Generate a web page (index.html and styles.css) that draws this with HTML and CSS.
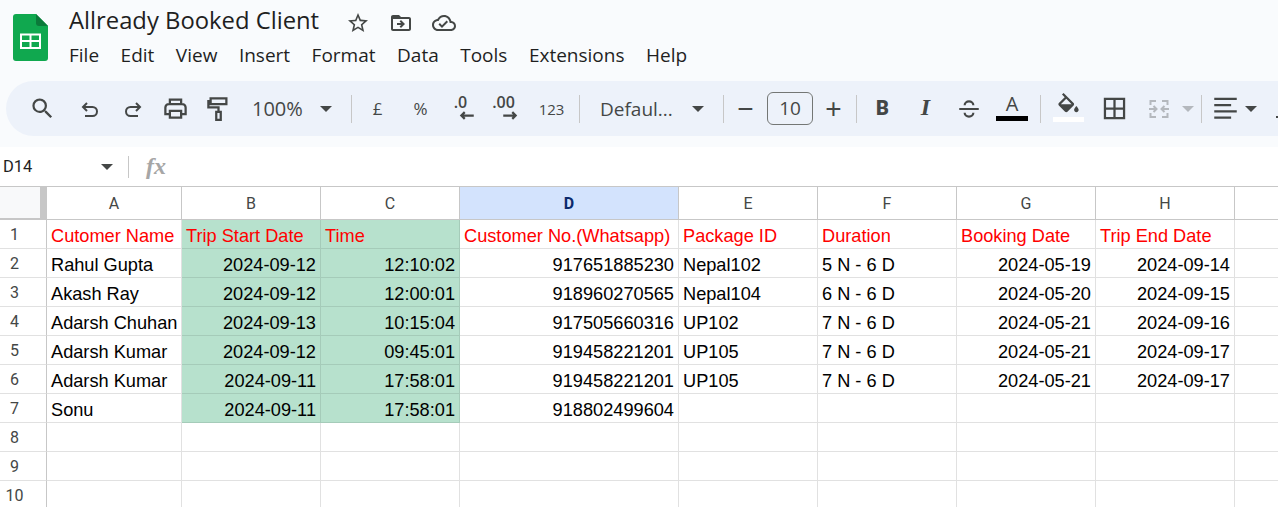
FILE: index.html
```html
<!DOCTYPE html>
<html lang="en">
<head>
    <meta charset="UTF-8">
    <title>Allready Booked Client</title>
    <link rel="stylesheet" href="styles.css">
</head>
<body>
    <header class="doc-header">
        <svg class="logo" viewBox="0 0 35 47">
            <path d="M3 0H23L35 12V44a3 3 0 0 1-3 3H3a3 3 0 0 1-3-3V3a3 3 0 0 1 3-3z" fill="#10a84f"/>
            <path d="M23 0L35 12H26a3 3 0 0 1-3-3z" fill="#0b7a3a"/>
            <path d="M7 19.500H28V35H7zM9 21.500V26H16.500V21.500zM18.500 21.500V26H26V21.500zM9 28V33H16.500V28zM18.500 28V33H26V28z" fill="#fff" fill-rule="evenodd"/>
        </svg>
        <div class="doc-info">
            <div class="title-row">
                <h1 class="doc-title">Allready Booked Client</h1>
                <svg class="title-icon" viewBox="0 0 24 24"><path d="M22 9.240l-7.190-.62L12 2 9.190 8.630 2 9.240l5.460 4.730L5.820 21 12 17.270 18.180 21l-1.630-7.030L22 9.240zM12 15.400l-3.760 2.270 1-4.280-3.320-2.880 4.380-.38L12 6.100l1.710 4.040 4.380.38-3.320 2.880 1 4.280L12 15.400z"/></svg>
                <svg class="title-icon" viewBox="0 0 24 24"><path d="M20 6h-8l-2-2H4c-1.100 0-2 .9-2 2v12c0 1.100.9 2 2 2h16c1.100 0 2-.9 2-2V8c0-1.100-.9-2-2-2zm0 12H4V8h16v10zm-8.010-9l-1.410 1.410L12.160 12H8v2h4.160l-1.590 1.590L11.990 17 16 13.010 11.990 9z"/></svg>
                <svg class="title-icon" viewBox="0 0 24 24"><path d="M19.350 10.040C18.670 6.590 15.640 4 12 4 9.110 4 6.600 5.640 5.350 8.040 2.340 8.360 0 10.910 0 14c0 3.310 2.690 6 6 6h13c2.760 0 5-2.240 5-5 0-2.640-2.050-4.780-4.650-4.960zM19 18H6c-2.210 0-4-1.790-4-4 0-2.050 1.530-3.760 3.560-3.970l1.070-.11.5-.95C8.080 7.140 9.940 6 12 6c2.620 0 4.880 1.860 5.390 4.430l.3 1.500 1.530.11c1.560.1 2.780 1.410 2.780 2.960 0 1.650-1.350 3-3 3zm-9-3.820l-2.090-2.090L6.500 13.500 10 17l6.010-6.010-1.410-1.410z"/></svg>
            </div>
            <nav class="menu">
                <span>File</span><span>Edit</span><span>View</span><span>Insert</span><span>Format</span><span>Data</span><span>Tools</span><span>Extensions</span><span>Help</span>
            </nav>
        </div>
    </header>

    <div class="toolbar">
        <div class="tool tool-search"><svg class="big" viewBox="0 0 24 24"><path d="M15.500 14h-.79l-.28-.27A6.470 6.470 0 0 0 16 9.500 6.500 6.500 0 1 0 9.500 16c1.610 0 3.090-.59 4.230-1.570l.27.28v.79l5 4.990L20.490 19l-4.990-5zm-6 0C7.010 14 5 11.990 5 9.500S7.010 5 9.500 5 14 7.010 14 9.500 11.990 14 9.500 14z"/></svg></div>
        <div class="tool"><svg class="line" viewBox="0 0 24 24"><path d="M9 6L5 10l4 4M5 10h9.500a4.500 4.500 0 0 1 0 9H7"/></svg></div>
        <div class="tool"><svg class="line" viewBox="0 0 24 24"><path d="M15 6l4 4-4 4M19 10H9.500a4.500 4.500 0 0 0 0 9H17"/></svg></div>
        <div class="tool"><svg class="line big" viewBox="0 0 24 24"><path d="M7 8V4h10v4M7 17H3v-6a3 3 0 0 1 3-3h12a3 3 0 0 1 3 3v6h-4M7 14h10v6H7z"/></svg></div>
        <div class="tool"><svg class="line big" viewBox="0 0 24 24"><path d="M5 3h14v5H5zM5 5.500H3V11h9v4M10 15h4v7h-4z"/></svg></div>
        <div class="zoom-val">100%</div>
        <div class="caret-box"><i class="caret"></i></div>
        <div class="sep sep-a"></div>
        <div class="tool text-tool">£</div>
        <div class="tool text-tool">%</div>
        <div class="tool dec-tool"><b>.0</b><svg class="line" viewBox="0 0 14 8"><path d="M13 4H2M5 1L2 4l3 3"/></svg></div>
        <div class="tool dec-tool"><b>.00</b><svg class="line" viewBox="0 0 14 8"><path d="M1 4h11M9 1l3 3-3 3"/></svg></div>
        <div class="tool text-tool num-tool">123</div>
        <div class="sep sep-b"></div>
        <div class="font-name">Defaul...</div>
        <div class="caret-box font-caret"><i class="caret"></i></div>
        <div class="sep sep-c"></div>
        <div class="tool step-tool minus-tool">−</div>
        <div class="size-box">10</div>
        <div class="tool step-tool plus-tool">+</div>
        <div class="sep sep-d"></div>
        <div class="tool style-tool bold-tool">B</div>
        <div class="tool style-tool italic-tool">I</div>
        <div class="tool"><svg class="line strike" viewBox="0 0 24 24"><path d="M3 12h18M8 8.500a4 3.500 0 0 1 8 0M8 15.500a4 3.500 0 0 0 8 0"/></svg></div>
        <div class="tool color-tool"><span class="color-a">A</span><i class="color-bar"></i></div>
        <div class="sep sep-e"></div>
        <div class="tool fill-tool"><svg viewBox="0 0 24 24"><path d="M16.560 8.940L7.620 0 6.210 1.410l2.380 2.380-5.150 5.150c-.59.59-.59 1.540 0 2.120l5.500 5.500c.29.29.68.44 1.060.44s.77-.15 1.060-.44l5.500-5.500c.59-.58.59-1.530 0-2.120zM5.210 10L10 5.210 14.790 10H5.210zM19 11.500s-2 2.170-2 3.500c0 1.100.9 2 2 2s2-.9 2-2c0-1.330-2-3.500-2-3.500z"/></svg><i class="fill-bar"></i></div>
        <div class="tool borders-tool"><svg class="line big" viewBox="0 0 24 24"><path d="M3.500 3.500h17v17h-17zM12 3.500v17M3.500 12h17"/></svg></div>
        <div class="tool merge-tool"><svg class="line" viewBox="0 0 24 24"><path d="M9 4H3.500v4M9 20H3.500v-4M15 4h5.500v4M15 20h5.500v-4M2 12h7M6.500 9L9.500 12l-3 3M22 12h-7M17.500 9L14.500 12l3 3"/></svg></div>
        <div class="caret-box merge-caret"><i class="caret"></i></div>
        <div class="sep sep-f"></div>
        <div class="tool align-tool"><svg class="line big" viewBox="0 0 24 24"><path d="M2 3.500h20M2 9h15M2 14.500h20M2 20h15"/></svg></div>
        <div class="caret-box align-caret"><i class="caret"></i></div>
        <div class="tool valign-tool"><svg class="line" viewBox="0 0 24 24"><path d="M12 3v11M8 10l4 4 4-4M4 20h16"/></svg></div>
    </div>

    <div class="formula-bar">
        <span class="cell-ref">D14</span>
        <div class="caret-box ref-caret"><i class="caret"></i></div>
        <div class="sep"></div>
        <span class="fx">fx</span>
    </div>

    <table class="sheet">
        <colgroup>
            <col class="col-gutter"><col class="col-a"><col class="col-w"><col class="col-w"><col class="col-d"><col class="col-w"><col class="col-w"><col class="col-w"><col class="col-w"><col class="col-rest">
        </colgroup>
        <thead>
            <tr>
                <th class="corner"></th>
                <th>A</th><th>B</th><th>C</th><th class="selected">D</th><th>E</th><th>F</th><th>G</th><th>H</th><th></th>
            </tr>
        </thead>
        <tbody>
            <tr class="head-row">
                <th>1</th><td>Cutomer Name</td><td class="green">Trip Start Date</td><td class="green">Time</td><td>Customer No.(Whatsapp)</td><td>Package ID</td><td>Duration</td><td>Booking Date</td><td>Trip End Date</td><td></td>
            </tr>
            <tr>
                <th>2</th><td>Rahul Gupta</td><td class="green num">2024-09-12</td><td class="green num">12:10:02</td><td class="num">917651885230</td><td>Nepal102</td><td>5 N - 6 D</td><td class="num">2024-05-19</td><td class="num">2024-09-14</td><td></td>
            </tr>
            <tr>
                <th>3</th><td>Akash Ray</td><td class="green num">2024-09-12</td><td class="green num">12:00:01</td><td class="num">918960270565</td><td>Nepal104</td><td>6 N - 6 D</td><td class="num">2024-05-20</td><td class="num">2024-09-15</td><td></td>
            </tr>
            <tr>
                <th>4</th><td>Adarsh Chuhan</td><td class="green num">2024-09-13</td><td class="green num">10:15:04</td><td class="num">917505660316</td><td>UP102</td><td>7 N - 6 D</td><td class="num">2024-05-21</td><td class="num">2024-09-16</td><td></td>
            </tr>
            <tr>
                <th>5</th><td>Adarsh Kumar</td><td class="green num">2024-09-12</td><td class="green num">09:45:01</td><td class="num">919458221201</td><td>UP105</td><td>7 N - 6 D</td><td class="num">2024-05-21</td><td class="num">2024-09-17</td><td></td>
            </tr>
            <tr>
                <th>6</th><td>Adarsh Kumar</td><td class="green num">2024-09-11</td><td class="green num">17:58:01</td><td class="num">919458221201</td><td>UP105</td><td>7 N - 6 D</td><td class="num">2024-05-21</td><td class="num">2024-09-17</td><td></td>
            </tr>
            <tr>
                <th>7</th><td>Sonu</td><td class="green num">2024-09-11</td><td class="green num">17:58:01</td><td class="num">918802499604</td><td></td><td></td><td></td><td></td><td></td>
            </tr>
            <tr><th>8</th><td></td><td></td><td></td><td></td><td></td><td></td><td></td><td></td><td></td></tr>
            <tr><th>9</th><td></td><td></td><td></td><td></td><td></td><td></td><td></td><td></td><td></td></tr>
            <tr><th>10</th><td></td><td></td><td></td><td></td><td></td><td></td><td></td><td></td><td></td></tr>
        </tbody>
    </table>
</body>
</html>
```

FILE: styles.css
```css
* {
    margin: 0;
    padding: 0;
    box-sizing: border-box;
}

html, body {
    height: 507px;
    overflow: hidden;
}

body {
    width: 1278px;
    background: #f9fbfd;
    font-family: "Open Sans", sans-serif;
    color: #1f1f1f;
}

/* top area */
.doc-header {
    height: 81px;
    display: flex;
    padding: 14px 0 0 13px;
}

.logo {
    width: 35px;
    height: 47px;
    flex: none;
}

.doc-info {
    margin-left: 21px;
    margin-top: -9px;
}

.title-row {
    display: flex;
    align-items: center;
    height: 30px;
}

.doc-title {
    font-size: 23.800px;
    font-weight: 400;
    width: 277px;
    white-space: nowrap;
}

.title-icon {
    width: 24px;
    height: 24px;
    margin: 6px 19px 0 0;
    fill: #444746;
}

.menu {
    display: flex;
    gap: 21.500px;
    margin-top: 8px;
    font-size: 19px;
    line-height: 24px;
}

/* toolbar */
.toolbar {
    margin-left: 6px;
    width: 1300px;
    height: 55px;
    background: #edf2fa;
    border-radius: 28px 0 0 28px;
    display: flex;
    align-items: center;
    padding-left: 15px;
    color: #444746;
}

.tool {
    width: 43px;
    height: 40px;
    flex: none;
    display: flex;
    align-items: center;
    justify-content: center;
}

.tool svg {
    width: 24px;
    height: 24px;
    fill: #444746;
}

.tool svg.big {
    width: 27px;
    height: 27px;
}

.tool svg.strike {
    width: 26px;
    height: 26px;
}

.tool svg.line {
    fill: none;
    stroke: #444746;
    stroke-width: 2;
}

.tool-search {
    margin-right: 4px;
}

.zoom-val {
    width: 73px;
    flex: none;
    padding-left: 12px;
    font-size: 20px;
}

.caret-box {
    width: 26px;
    flex: none;
    display: flex;
    justify-content: center;
}

.caret {
    width: 0;
    height: 0;
    border-left: 6px solid transparent;
    border-right: 6px solid transparent;
    border-top: 6px solid #444746;
}

.sep {
    width: 1px;
    height: 28px;
    flex: none;
    background: #c7c7c7;
}

.sep-a { margin: 0 4px 0 12px; }
.sep-b { margin: 0 0 0 6px; }
.sep-c { margin: 0 0 0 12px; }
.sep-d { margin: 0 4px 0 2px; }
.sep-e { margin: 0 5px 0 6px; }
.sep-f { margin: 0 2px 0 6px; }

.text-tool {
    font-size: 17px;
}

.num-tool {
    font-size: 15px;
    margin-left: 2px;
}

.dec-tool {
    flex-direction: column;
    font-size: 16px;
    line-height: 16px;
}

.dec-tool b {
    font-weight: 600;
    margin-left: -6px;
    margin-top: -3px;
}

.tool.dec-tool svg {
    width: 16px;
    height: 9px;
    margin-left: 7px;
    margin-top: 1px;
}

.font-name {
    width: 85px;
    flex: none;
    margin-left: 20px;
    font-size: 19px;
    white-space: nowrap;
}

.step-tool {
    font-size: 28px;
    font-family: "Liberation Sans", sans-serif;
}

.minus-tool {
    width: 43px;
}

.plus-tool {
    width: 41px;
}

.size-box {
    width: 46px;
    height: 33px;
    flex: none;
    border: 1px solid #747775;
    border-radius: 6px;
    font-size: 19px;
    line-height: 30px;
    text-align: center;
}

.style-tool {
    font-size: 20px;
    padding-bottom: 2px;
}

.bold-tool {
    font-family: Roboto, sans-serif;
    font-weight: 900;
}

.italic-tool {
    font-family: "Liberation Serif", serif;
    font-weight: 700;
    font-style: italic;
    font-size: 24px;
}

.color-tool {
    flex-direction: column;
    justify-content: flex-start;
    width: 44px;
}

.color-a {
    font-size: 20px;
    line-height: 24px;
    margin-top: 3px;
}

.color-bar {
    width: 32px;
    height: 5px;
    background: #000;
    flex: none;
}

.fill-tool {
    flex-direction: column;
    justify-content: flex-start;
    width: 44px;
}

.tool.fill-tool svg {
    width: 27px;
    height: 27px;
    flex: none;
    margin-top: 4px;
}

.fill-bar {
    width: 31px;
    height: 5px;
    flex: none;
    background: #fff;
    margin-top: -3px;
}

.borders-tool {
    margin-left: 1px;
    width: 46px;
}

.merge-tool {
    width: 44px;
}

.tool.merge-tool svg.line {
    stroke: #b4b8bd;
}

.merge-caret {
    width: 14px;
}

.merge-caret .caret {
    border-top-color: #b4b8bd;
}

.align-tool {
    width: 42px;
}

.align-caret {
    width: 10px;
    margin-right: 6px;
}

/* formula bar */
.formula-bar {
    margin-top: 11px;
    height: 39px;
    background: #fff;
    display: flex;
    align-items: center;
    padding-left: 3px;
    font-family: Roboto, sans-serif;
}

.cell-ref {
    width: 91px;
    font-size: 16.500px;
    color: #1f1f1f;
}

.ref-caret {
    width: 26px;
}

.formula-bar .sep {
    height: 22px;
    margin-left: 8px;
}

.fx {
    margin-left: 17px;
    font-family: "Liberation Serif", serif;
    font-style: italic;
    font-weight: 700;
    font-size: 24px;
    color: #a6a6a6;
}

/* grid */
.sheet {
    table-layout: fixed;
    width: 1278px;
    border-collapse: separate;
    border-spacing: 0;
    background: #fff;
    font-family: "Liberation Sans", sans-serif;
    font-size: 18.200px;
    color: #000;
}

.col-gutter { width: 47px; }
.col-a { width: 135px; }
.col-w { width: 139px; }
.col-d { width: 219px; }
.col-rest { width: 44px; }

.sheet thead th {
    height: 34px;
    border-top: 1px solid #c7c7c7;
    border-bottom: 1px solid #c7c7c7;
    border-right: 1px solid #c7c7c7;
    font-family: Roboto, sans-serif;
    font-weight: 400;
    font-size: 16px;
    color: #444746;
}

.sheet thead th.corner {
    background: #f8f9fa;
    border-right: 7px solid #c7c7c7;
    border-bottom: 2px solid #c7c7c7;
}

.sheet thead th.selected {
    background: #d3e3fd;
    color: #0b2a6b;
    font-weight: 700;
}

.sheet tbody th {
    height: 29px;
    padding: 1px 17px 0 0;
    border-right: 1px solid #c7c7c7;
    border-bottom: 1px solid #e1e1e1;
    font-weight: 400;
    font-size: 16px;
    color: #444746;
    font-family: Roboto, sans-serif;
}

.sheet td {
    height: 29px;
    padding: 5px 4px 0 4px;
    border-right: 1px solid #e1e1e1;
    border-bottom: 1px solid #e1e1e1;
    white-space: nowrap;
    overflow: hidden;
}

.sheet td.num {
    text-align: right;
}

.sheet td.green {
    background: #b7e1cd;
    border-color: #a5cbb9;
}

.head-row td {
    color: #f00;
}
```
